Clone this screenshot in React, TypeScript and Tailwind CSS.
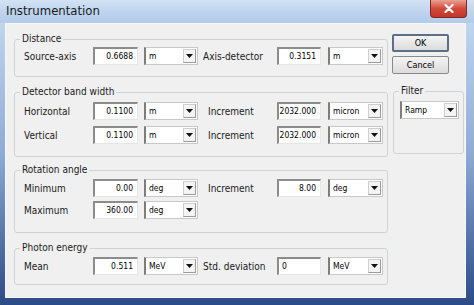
import React from 'react'

const font = "font-['Liberation_Sans_Narrow','DejaVu_Sans_Condensed','Liberation_Sans',sans-serif]"

function NumBox({ value, left = false }: { value: string; left?: boolean }) {
  return (
    <div
      className={`h-[18px] w-full overflow-hidden bg-white border-t-2 border-l-2 border-t-[#8c8c8c] border-l-[#8c8c8c] border-b border-r border-b-[#e6e6e6] border-r-[#e6e6e6] flex items-center text-[8.5px] text-black ${
        left ? 'justify-start pl-[3px]' : 'justify-end pr-[4px]'
      }`}
    >
      {value}
    </div>
  )
}

function Combo({ value }: { value: string }) {
  return (
    <div className="h-[18px] w-full bg-white border border-[#c8c8c8] border-l-2 border-l-[#7d7d7d] flex items-center text-[8.5px] text-black">
      <span className="flex-1 pl-[3px] overflow-hidden">{value}</span>
      <span className="h-[14px] w-[13px] mr-[1px] border border-[#cfcfcf] border-b-[#9a9a9a] border-r-[#9a9a9a] bg-[#f4f4f4] flex items-center justify-center">
        <svg width="7" height="4" viewBox="0 0 7 4">
          <path d="M0 0 L7 0 L3.5 4 Z" fill="#111" />
        </svg>
      </span>
    </div>
  )
}

type Half = { label: string; value: string; unit: string; left?: boolean }

function Row({ a, b, bGap = 5, bLabel = 74 }: { a: Half; b?: Half; bGap?: number; bLabel?: number }) {
  return (
    <div className="flex items-center h-[18px] pl-[9px] text-[10px] text-[#1a1a1a]">
      <span className="w-[69px]">{a.label}</span>
      <div className="w-[45px]">
        <NumBox value={a.value} />
      </div>
      <div className="w-[54px] ml-[6px]">
        <Combo value={a.unit} />
      </div>
      {b && (
        <>
          <span style={{ marginLeft: bGap, width: bLabel }}>{b.label}</span>
          <div className="w-[44px]">
            <NumBox value={b.value} left={b.left} />
          </div>
          <div className="w-[55px] ml-[7px]">
            <Combo value={b.unit} />
          </div>
        </>
      )}
    </div>
  )
}

function Group({ title, className, children }: { title: string; className: string; children: React.ReactNode }) {
  return (
    <fieldset className={`border border-[#cfd3d6] rounded-[3px] ${className}`}>
      <legend className="ml-[5px] px-[2px] text-[10px] leading-[12px] text-[#1a1a1a]">{title}</legend>
      {children}
    </fieldset>
  )
}

export default function App() {
  return (
    <div className={`w-[474px] h-[305px] flex flex-col bg-gradient-to-b from-[#c9dcf1] via-[#8fabd6] to-[#2c4a88] ${font}`}>
      <div className="h-[23px] flex items-start justify-between bg-gradient-to-b from-[#d3e3f5] via-[#bfd4ee] to-[#b3cbea]">
        <span className="pl-[6px] pt-[4px] text-[13px] leading-[14px] text-[#1a1a1a]">Instrumentation</span>
        <div className="mr-[7px] w-[37px] h-[18px] rounded-b-[4px] border border-t-0 border-[#7d2a22] bg-gradient-to-b from-[#e8a093] via-[#d2483a] to-[#c1362a] flex items-center justify-center">
          <svg width="10" height="9" viewBox="0 0 10 9">
            <path d="M1.5 1 L8.5 8 M8.5 1 L1.5 8" stroke="#fff" strokeWidth="2.2" strokeLinecap="round" />
          </svg>
        </div>
      </div>
      <div className="flex-1 flex pl-[5px] pr-[8px] pb-[7px]">
        <div className="flex-1 flex bg-[#f0f0f0] border border-[#f7f7f7] pl-[8px] pt-[9px]">
          <div className="w-[374px] flex flex-col">
            <Group title="Distance" className="h-[44px]">
              <div className="mt-[2px]">
                <Row
                  a={{ label: 'Source-axis', value: '0.6688', unit: 'm' }}
                  b={{ label: 'Axis-detector', value: '0.3151', unit: 'm' }}
                />
              </div>
            </Group>
            <Group title="Detector band width" className="h-[71px] mt-[9px]">
              <div className="mt-[4px] flex flex-col gap-[6px]">
                <Row
                  a={{ label: 'Horizontal', value: '0.1100', unit: 'm' }}
                  b={{ label: 'Increment', value: '2032.000', unit: 'micron' }}
                  bGap={10}
                  bLabel={69}
                />
                <Row
                  a={{ label: 'Vertical', value: '0.1100', unit: 'm' }}
                  b={{ label: 'Increment', value: '2032.000', unit: 'micron' }}
                  bGap={10}
                  bLabel={69}
                />
              </div>
            </Group>
            <Group title="Rotation angle" className="h-[69px] mt-[7px]">
              <div className="mt-[3px] flex flex-col gap-[4px]">
                <Row
                  a={{ label: 'Minimum', value: '0.00', unit: 'deg' }}
                  b={{ label: 'Increment', value: '8.00', unit: 'deg' }}
                  bGap={10}
                  bLabel={69}
                />
                <Row a={{ label: 'Maximum', value: '360.00', unit: 'deg' }} />
              </div>
            </Group>
            <Group title="Photon energy" className="h-[43px] mt-[9px]">
              <div className="mt-[3px]">
                <Row
                  a={{ label: 'Mean', value: '0.511', unit: 'MeV' }}
                  b={{ label: 'Std. deviation', value: '0', unit: 'MeV', left: true }}
                />
              </div>
            </Group>
          </div>
          <div className="ml-[4px] flex flex-col pt-[1px]">
            <button className="w-[57px] h-[18px] rounded-[2px] border-2 border-[#5c6f86] bg-gradient-to-b from-[#f4f4f4] to-[#dcdcdc] text-[9px] text-black leading-none">
              OK
            </button>
            <button className="mt-[4px] w-[57px] h-[18px] rounded-[2px] border border-[#8a8a8a] bg-gradient-to-b from-[#f4f4f4] to-[#dcdcdc] text-[9px] text-black leading-none">
              Cancel
            </button>
            <Group title="Filter" className="ml-[1px] w-[71px] h-[69px] mt-[11px]">
              <div className="mt-[4px] ml-[6px] w-[59px]">
                <Combo value="Ramp" />
              </div>
            </Group>
          </div>
        </div>
      </div>
    </div>
  )
}
